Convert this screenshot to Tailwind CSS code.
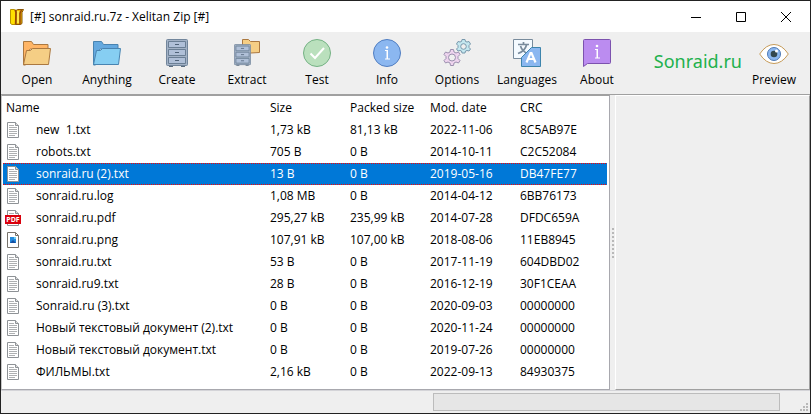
<!DOCTYPE html>
<html lang="en">
<head>
<meta charset="utf-8">
<meta name="viewport" content="width=device-width, initial-scale=1">
<title>[#] sonraid.ru.7z - Xelitan Zip [#]</title>
<script src="https://cdn.jsdelivr.net/npm/@tailwindcss/browser@4"></script>
</head>
<body class="flex min-h-screen flex-col border border-[#222] bg-[#efefef] font-['Open_Sans','Noto_Sans',sans-serif] text-[12px] leading-[16px] text-black">
<svg class="hidden" aria-hidden="true">
  <symbol id="txt" viewBox="0 0 16 16">
    <path d="M2.5.5h8l3 3v12h-11z" fill="#fff" stroke="#8e9296"/>
    <path d="M10.5.5v3h3" fill="#ddd" stroke="#8e9296"/>
    <path d="M4 3.5h5M4 5.500h8M4 7.500h8M4 9.500h8M4 11.500h8M4 13.500h6" stroke="#aeb0b2"/>
  </symbol>
  <symbol id="cabinet" viewBox="0 0 22 28">
    <path d="M3 26h4v2H3zM15 26h4v2h-4z" fill="#5b6c7e"/>
    <rect x=".5" y=".5" width="21" height="26" rx="1" fill="#a3b2c6" stroke="#72869c"/>
    <g fill="#b0c0d8" stroke="#6b7f95"><path d="M2.500 2.500h17v6h-17zM2.500 10.500h17v6h-17zM2.500 18.500h17v6h-17z"/></g>
    <path d="M9 5.500h4M9 13.500h4M9 21.500h4" stroke="#4f6278"/>
  </symbol>
</svg>

<header class="flex h-[31px] shrink-0 items-center bg-white pr-[1px] pl-[9px]">
  <svg class="h-4 w-[14px]" viewBox="0 0 14 16" aria-hidden="true">
    <path d="M.5.500h4l1.500 1v14h-4l-1.500-1z" fill="#ffe000" stroke="#b99300"/>
    <path d="M6 1.500L7.500.500h6L12 3.500v11l-1.500 1H6z" fill="#efb900" stroke="#8a5606"/>
    <path d="M5 1l1 2.500-.5 12M11.500 1l-1.500 3.500v11" fill="none" stroke="#984707" stroke-width="1.500"/>
    <path d="M8 2v12" stroke="#ffe84a" stroke-width="2"/>
  </svg>
  <h1 class="ml-[6px] text-[12px]">[#] sonraid.ru.7z - Xelitan Zip [#]</h1>
  <div class="ml-auto flex h-full">
    <button class="flex w-[45px] items-center justify-center" aria-label="Minimize"><svg class="size-[10px]" viewBox="0 0 10 10" stroke="#000" fill="none"><path d="M0 5.500h10"/></svg></button>
    <button class="flex w-[45px] items-center justify-center" aria-label="Maximize"><svg class="size-[10px]" viewBox="0 0 10 10" stroke="#000" fill="none"><path d="M.5.500h9v9h-9z"/></svg></button>
    <button class="flex w-[46px] items-center justify-center" aria-label="Close"><svg class="size-[10px]" viewBox="0 0 10 10" stroke="#000" fill="none"><path d="M0 0l10 10M10 0L0 10"/></svg></button>
  </div>
</header>

<nav class="flex h-[63px] shrink-0 items-start border-b border-[#a0a0a0] pt-[7px] pr-[4px] pl-[1px]" aria-label="Toolbar">
  <button class="flex w-[70px] flex-col items-center gap-[5px]">
    <svg class="size-7" viewBox="0 0 28 28" aria-hidden="true"><path d="M.5 26V2.500h8l2 3h14.500V10H7.500L5 12 2.500 26z" fill="#ffb566" stroke="#ab7840"/><path d="M.5 25.500l3-14h4l2-2h18l-2 16z" fill="#f5ce85" stroke="#ab7840"/></svg>
    Open</button>
  <button class="flex w-[70px] flex-col items-center gap-[5px]">
    <svg class="size-7" viewBox="0 0 28 28" aria-hidden="true"><path d="M.5 26V2.500h8l2 3h14.500V10H7.500L5 12 2.500 26z" fill="#65a9df" stroke="#4984b1"/><path d="M.5 25.500l3-14h4l2-2h18l-2 16z" fill="#86cef2" stroke="#4984b1"/></svg>
    Anything</button>
  <button class="flex w-[70px] flex-col items-center gap-[5px]">
    <svg class="h-7 w-[22px]" aria-hidden="true"><use href="#cabinet"/></svg>
    Create</button>
  <button class="flex w-[70px] flex-col items-center gap-[5px]">
    <svg class="size-7" viewBox="0 0 28 28" aria-hidden="true"><path d="M9.500 14.500V.5h6l2 2h9v11z" fill="#f5ce85" stroke="#ab7840"/><use href="#cabinet" x="1" y="5" width="17" height="22"/></svg>
    Extract</button>
  <button class="flex w-[70px] flex-col items-center gap-[5px]">
    <svg class="size-7" viewBox="0 0 28 28" fill="none" aria-hidden="true"><circle cx="14" cy="14" r="13.500" fill="#bae0bd" stroke="#74b184"/><path d="M7.500 14.500l4.500 4.500 9-10" stroke="#fff" stroke-width="2"/></svg>
    Test</button>
  <button class="flex w-[70px] flex-col items-center gap-[5px]">
    <svg class="size-7" viewBox="0 0 28 28" aria-hidden="true"><circle cx="14" cy="14" r="13.500" fill="#8bb7f0" stroke="#507dc0"/><circle cx="14" cy="8.500" r="1.300" fill="#fff"/><path d="M12 11h3v8.500h2v1h-5v-1h1.500V12H12z" fill="#fff"/></svg>
    Info</button>
  <button class="flex w-[70px] flex-col items-center gap-[5px]">
    <svg class="size-7" viewBox="0 0 28 28" aria-hidden="true">
      <g stroke="#9b8fae" fill="#eed4ee" stroke-linejoin="round"><path d="M7.500 10.500h3l.5 2.500 2 1 2.500-1 1.500 2.500-2 2v2l2 2-1.500 2.500-2.500-1-2 1-.5 2.500h-3l-.5-2.500-2-1-2.500 1L1 21.500l2-2v-2l-2-2L2.500 13 5 14l2-1z"/><circle cx="9" cy="18.500" r="3.500" fill="#efefef"/></g>
      <g stroke="#7898ac" fill="#c4e7ef" stroke-linejoin="round"><path d="M19 .5h3l.5 2 1.500.5 2-.5 1.500 2.500-1.500 1.500v2l1.500 1.500-1.500 2-2-.5-1.500.5-.5 2h-3l-.5-2-1.500-.5-2 .5-1.500-2 1.500-1.500v-2L13.500 5 15 2.500l2 .5 1.500-.5z"/><circle cx="20.500" cy="7.500" r="2.800" fill="#efefef"/></g>
    </svg>
    Options</button>
  <button class="flex w-[70px] flex-col items-center gap-[5px]">
    <svg class="size-7" viewBox="0 0 28 28" fill="none" aria-hidden="true"><path d="M.5.500h19v9l-10 10h-9z" fill="#f4faff" stroke="#788b9c"/><path d="M5 5.500h11M10.500 3v2.500M13.500 6c-1 4-4 7-8.500 8.500M7.500 7c1 3.500 4 6.500 8 8" stroke="#788b9c" stroke-width="1.700"/><path d="M18.500 8.500h9v19h-19v-9z" fill="#8bb7f0" stroke="#3d84ac"/><path d="M13.500 23.500L17.500 14h1l4 9.500M15 20h6" stroke="#fff" stroke-width="2.200"/></svg>
    Languages</button>
  <button class="flex w-[70px] flex-col items-center gap-[5px]">
    <svg class="size-7" viewBox="0 0 28 28" aria-hidden="true"><path d="M1.500.5h25q1 0 1 1v22q0 1-1 1H4.500l-4 3v-26q0-1 1-1z" fill="#bb8cf0" stroke="#7c52ae"/><circle cx="14" cy="7" r="1.300" fill="#fff"/><path d="M12 10h3v8.500h2v1h-5v-1h1.500V11H12z" fill="#fff"/></svg>
    About</button>
  <a href="#" class="mt-[12px] ml-auto font-['Noto_Sans',sans-serif] text-[18px] leading-[20px] text-[#22b14c]">Sonraid.ru</a>
  <button class="flex w-[64px] flex-col items-center gap-[5px]">
    <svg class="h-7 w-[30px]" viewBox="0 0 30 28" aria-hidden="true"><path d="M.7 15Q7 5.500 15 5.500T29.300 15Q23 24.500 15 24.500T.7 15z" fill="#fff" stroke="#c69b58"/><circle cx="15" cy="15" r="6.500" fill="#8bb7f0" stroke="#4e7ab5"/><circle cx="15" cy="15" r="3.300" fill="#33484f"/><circle cx="17.500" cy="12" r="1.500" fill="#fff"/></svg>
    Preview</button>
</nav>

<main class="flex grow">
  <section class="grow border border-t-[#a0a0a0] border-r-[#a8a8ae] border-b-[#a8a8ae] border-l-[#c8c8c8] bg-white pt-[1px] pr-[2px] pb-1 pl-[1px]">
    <table class="w-full table-fixed border-collapse text-left">
      <colgroup><col><col class="w-[80px]"><col class="w-[80px]"><col class="w-[90px]"><col class="w-[90px]"></colgroup>
      <thead><tr class="h-[22px]"><th class="p-0 pl-[3px] font-normal">Name</th><th class="p-0 pl-[3px] font-normal">Size</th><th class="p-0 pl-[3px] font-normal">Packed size</th><th class="p-0 pl-[3px] font-normal">Mod. date</th><th class="p-0 pl-[3px] font-normal">CRC</th></tr></thead>
      <tbody class="[&_td]:p-0 [&_td]:pl-[3px] [&_tr]:h-[22px] [&_svg]:mr-[15px] [&_svg]:size-4 [&_svg]:shrink-0 [&_div]:flex [&_div]:items-center [&_div]:-ml-px [&_div]:whitespace-pre">
        <tr><td><div><svg><use href="#txt"/></svg>new  1.txt</div></td><td>1,73 kB</td><td>81,13 kB</td><td>2022-11-06</td><td>8C5AB97E</td></tr>
        <tr><td><div><svg><use href="#txt"/></svg>robots.txt</div></td><td>705 B</td><td>0 B</td><td>2014-10-11</td><td>C2C52084</td></tr>
        <tr class="bg-[#0078d7] text-white [&>td]:bg-[linear-gradient(90deg,#ff0000_50%,#0078d7_50%),linear-gradient(90deg,#ff0000_50%,#0078d7_50%)] [&>td]:[background-position:0_0,0_100%] [&>td]:[background-size:2px_1px] [&>td]:bg-repeat-x" aria-selected="true"><td><div><svg><use href="#txt"/></svg>sonraid.ru (2).txt</div></td><td>13 B</td><td>0 B</td><td>2019-05-16</td><td>DB47FE77</td></tr>
        <tr><td><div><svg><use href="#txt"/></svg>sonraid.ru.log</div></td><td>1,08 MB</td><td>0 B</td><td>2014-04-12</td><td>6BB76173</td></tr>
        <tr><td><div><svg viewBox="0 0 16 16"><use href="#txt"/><path d="M0 5h16v9H0z" fill="#d9000d"/><text x="8" y="12" text-anchor="middle" font-family="Open Sans, sans-serif" font-size="7" font-weight="700" fill="#fff">PDF</text></svg>sonraid.ru.pdf</div></td><td>295,27 kB</td><td>235,99 kB</td><td>2014-07-28</td><td>DFDC659A</td></tr>
        <tr><td><div><svg viewBox="0 0 16 16"><path d="M2.500.500h8l3 3v12h-11z" fill="#fff" stroke="#77726a"/><path d="M10.500.500v3h3" fill="none" stroke="#77726a"/><path d="M5 5h6v6H5z" fill="#2389dc"/><path d="M5 11l3-3 3 3z" fill="#174f9f"/><path d="M9 5h2v2H9z" fill="#6dd0f5"/></svg>sonraid.ru.png</div></td><td>107,91 kB</td><td>107,00 kB</td><td>2018-08-06</td><td>11EB8945</td></tr>
        <tr><td><div><svg><use href="#txt"/></svg>sonraid.ru.txt</div></td><td>53 B</td><td>0 B</td><td>2017-11-19</td><td>604DBD02</td></tr>
        <tr><td><div><svg><use href="#txt"/></svg>sonraid.ru9.txt</div></td><td>28 B</td><td>0 B</td><td>2016-12-19</td><td>30F1CEAA</td></tr>
        <tr><td><div><svg><use href="#txt"/></svg>Sonraid.ru (3).txt</div></td><td>0 B</td><td>0 B</td><td>2020-09-03</td><td>00000000</td></tr>
        <tr><td><div><svg><use href="#txt"/></svg>Новый текстовый документ (2).txt</div></td><td>0 B</td><td>0 B</td><td>2020-11-24</td><td>00000000</td></tr>
        <tr><td><div><svg><use href="#txt"/></svg>Новый текстовый документ.txt</div></td><td>0 B</td><td>0 B</td><td>2019-07-26</td><td>00000000</td></tr>
        <tr><td><div><svg><use href="#txt"/></svg>ФИЛЬМЫ.txt</div></td><td>2,16 kB</td><td>0 B</td><td>2022-09-13</td><td>84930375</td></tr>
      </tbody>
    </table>
  </section>
  <div class="flex w-[5px] shrink-0 items-center justify-center" role="separator" aria-orientation="vertical">
    <div class="h-[30px] border-l-2 border-dotted border-[#b8b8b8]"></div>
  </div>
  <aside class="w-[195px] shrink-0 border border-t-white border-r-[#a0a0a0] border-b-[#a0a0a0] border-l-white" aria-label="Preview"></aside>
</main>

<footer class="flex h-[23px] shrink-0 items-center justify-end border-t border-[#d4d4d8] pr-[2px]">
  <div class="h-[18px] w-[347px] border border-[#bcbcbc] bg-[#e6e6e6]" role="progressbar" aria-label="Progress" aria-valuenow="0"></div>
  <svg class="mb-[2px] ml-5 size-2 self-end" viewBox="0 0 8 8" fill="#b8b8b8" aria-hidden="true"><path d="M6 0h2v2H6zM3 3h2v2H3zM6 3h2v2H6zM0 6h2v2H0zM3 6h2v2H3zM6 6h2v2H6z"/></svg>
</footer>
</body>
</html>
